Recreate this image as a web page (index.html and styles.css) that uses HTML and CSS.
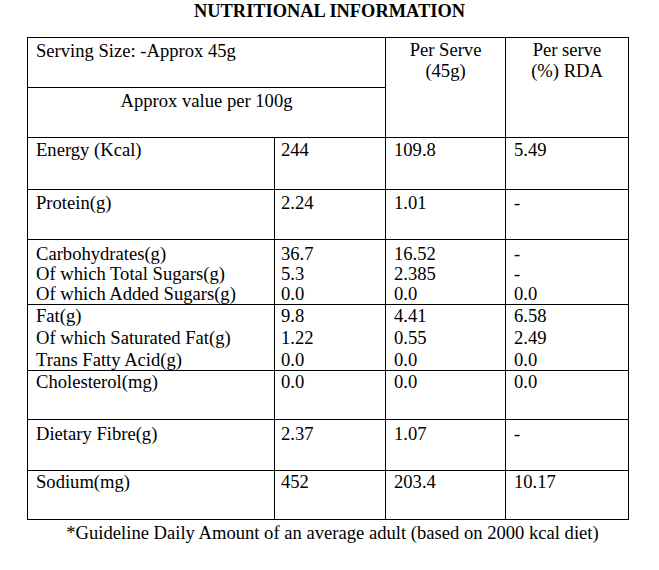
FILE: index.html
```html
<!DOCTYPE html>
<html>
<head>
<meta charset="utf-8">
<title>Nutritional Information</title>
<link rel="stylesheet" href="styles.css">
</head>
<body>
<div class="page">
  <h1 class="title">NUTRITIONAL INFORMATION</h1>
  <table class="nutri">
    <colgroup>
      <col class="c1"><col class="c2"><col class="c3"><col class="c4">
    </colgroup>
    <tbody>
      <tr class="h1">
        <td colspan="2" class="serving">Serving Size: -Approx 45g</td>
        <td rowspan="2" class="center">Per Serve<br>(45g)</td>
        <td rowspan="2" class="center">Per serve<br>(%) RDA</td>
      </tr>
      <tr class="h2">
        <td colspan="2" class="center approx">Approx value per 100g</td>
      </tr>
      <tr class="r-energy">
        <td>Energy (Kcal)</td><td class="num">244</td><td>109.8</td><td>5.49</td>
      </tr>
      <tr class="r-protein">
        <td>Protein(g)</td><td class="num">2.24</td><td>1.01</td><td>-</td>
      </tr>
      <tr class="r-carbs">
        <td>Carbohydrates(g)<br>Of which Total Sugars(g)<br>Of which Added Sugars(g)</td>
        <td class="num">36.7<br>5.3<br>0.0</td>
        <td>16.52<br>2.385<br>0.0</td>
        <td>-<br>-<br>0.0</td>
      </tr>
      <tr class="r-fat">
        <td>Fat(g)<br>Of which Saturated Fat(g)<br>Trans Fatty Acid(g)</td>
        <td class="num">9.8<br>1.22<br>0.0</td>
        <td>4.41<br>0.55<br>0.0</td>
        <td>6.58<br>2.49<br>0.0</td>
      </tr>
      <tr class="r-chol">
        <td>Cholesterol(mg)</td><td class="num">0.0</td><td>0.0</td><td>0.0</td>
      </tr>
      <tr class="r-fibre">
        <td>Dietary Fibre(g)</td><td class="num">2.37</td><td>1.07</td><td>-</td>
      </tr>
      <tr class="r-sodium">
        <td>Sodium(mg)</td><td class="num">452</td><td>203.4</td><td>10.17</td>
      </tr>
    </tbody>
  </table>
  <p class="footnote">*Guideline Daily Amount of an average adult (based on 2000 kcal diet)</p>
</div>
</body>
</html>
```
FILE: styles.css
```css
html, body {
  margin: 0;
  padding: 0;
  background: #ffffff;
}
body {
  font-family: "Liberation Serif", "Times New Roman", serif;
  font-size: 18.6px;
  line-height: 21.5px;
  color: #000000;
}
.page {
  width: 659px;
}
.title {
  margin: 1px 0 0 0;
  font-size: 18.4px;
  font-weight: bold;
  line-height: 21.5px;
  text-align: center;
}
.nutri {
  margin: 14px 0 0 27px;
  border-collapse: collapse;
  table-layout: fixed;
  width: 602px;
}
.c1 { width: 247px; }
.c2 { width: 111px; }
.c3 { width: 120px; }
.c4 { width: 123px; }
.nutri td {
  box-sizing: border-box;
  border: 1px solid #000000;
  padding: 1px 4px 0 8px;
  vertical-align: top;
  white-space: nowrap;
}
.nutri td.num {
  padding-left: 6px;
}
.nutri td.center {
  text-align: center;
  padding-left: 4px;
}
.h1 td { height: 50px; }
.h2 td { height: 50px; }
.serving { padding-top: 2px !important; }
.approx { padding-top: 2px !important; }
.r-energy td { height: 52px; padding-top: 1px; }
.r-protein td { height: 50px; padding-top: 2px; }
.r-carbs td { height: 65px; padding-top: 4px; line-height: 20.3px; }
.r-fat td { height: 65px; padding-top: 0; line-height: 21.6px; }
.r-chol td { height: 49px; padding-top: 0; }
.r-fibre td { height: 51px; padding-top: 3px; }
.r-sodium td { height: 49px; padding-top: 0; }
.footnote {
  margin: 2px 0 0 0;
  padding-left: 6px;
  text-align: center;
  white-space: nowrap;
}
```
